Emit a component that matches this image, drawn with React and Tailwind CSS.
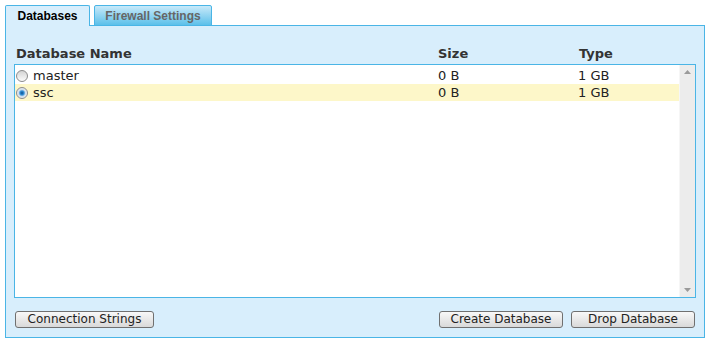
import React from 'react';

const rows = [
  { name: 'master', size: '0 B', type: '1 GB', selected: false },
  { name: 'ssc', size: '0 B', type: '1 GB', selected: true },
];

const Radio = ({ checked }) => (
  <span
    className={`inline-block w-[12px] h-[12px] rounded-full border border-[#8c8c8c] shrink-0 ${
      checked ? 'bg-[radial-gradient(circle,#0b4f8e_0,#2f8fd6_2px,#cfdeec_3.5px,#f4f4f4_6px)]' : 'bg-[linear-gradient(#d4d4d4,#fbfbfb)]'
    }`}
  />
);

const Button = ({ children, className = '' }) => (
  <button
    className={`h-[17px] px-0 rounded-[3px] border border-[#707070] bg-[linear-gradient(#f8f8f8,#d9d9d9)] text-[12px] leading-[15px] text-[#222] whitespace-nowrap ${className}`}
  >
    {children}
  </button>
);

export default function App() {
  const font = { fontFamily: '"DejaVu Sans", Verdana, sans-serif' };
  const tabFont = { fontFamily: '"Liberation Sans", Arial, sans-serif' };
  return (
    <div className="w-[710px] h-[342px] bg-white pt-[5px] pl-[5px]" style={font}>
      {/* Tabs */}
      <div className="flex items-end gap-[4px] h-[21px]" style={tabFont}>
        <div className="relative z-10 h-[21px] w-[85px] border border-b-0 border-[#4ab5e6] bg-[#d8eefc] rounded-t-[2px] text-[12px] font-bold text-black flex items-center justify-center">
          Databases
        </div>
        <div className="h-[21px] w-[118px] border border-[#4ab5e6] bg-[linear-gradient(#c8e9f9,#5cc0ea)] rounded-t-[2px] text-[12px] font-bold text-[#666] flex items-center justify-center">
          Firewall Settings
        </div>
      </div>

      {/* Panel */}
      <div className="-mt-px w-[700px] h-[313px] border border-[#4ab5e6] bg-[#d8eefc] px-[8px] pt-[18px] flex flex-col">
        <div className="flex text-[13px] font-bold text-[#333] h-[20px] items-center pl-[2px]">
          <div className="w-[422px]">Database Name</div>
          <div className="w-[141px]">Size</div>
          <div>Type</div>
        </div>

        <div className="w-[682px] h-[234px] border border-[#4ab5e6] bg-white flex">
          <div className="flex-1 pt-[2px]">
            {rows.map((r) => (
              <div
                key={r.name}
                className={`flex items-center h-[17px] text-[13px] text-[#222] ${r.selected ? 'bg-[#fdf7c9]' : ''}`}
              >
                <div className="w-[422px] flex items-center gap-[5px] pl-px">
                  <Radio checked={r.selected} />
                  <span>{r.name}</span>
                </div>
                <div className="w-[141px] pl-px">{r.size}</div>
                <div>{r.type}</div>
              </div>
            ))}
          </div>
          <div className="w-[16px] bg-[#ececec] border-l border-[#f6f6f6] flex flex-col justify-between items-center py-[5px]">
            <svg width="7" height="4" viewBox="0 0 7 4"><path d="M0 4 L3.5 0 L7 4 Z" fill="#9a9a9a" /></svg>
            <svg width="7" height="4" viewBox="0 0 7 4"><path d="M0 0 L3.5 4 L7 0 Z" fill="#9a9a9a" /></svg>
          </div>
        </div>

        <div className="flex items-center mt-[13px] pl-px">
          <Button className="w-[139px]">Connection Strings</Button>
          <div className="flex-1" />
          <Button className="w-[124px]">Create Database</Button>
          <Button className="w-[124px] ml-[8px] mr-px">Drop Database</Button>
        </div>
      </div>
    </div>
  );
}
